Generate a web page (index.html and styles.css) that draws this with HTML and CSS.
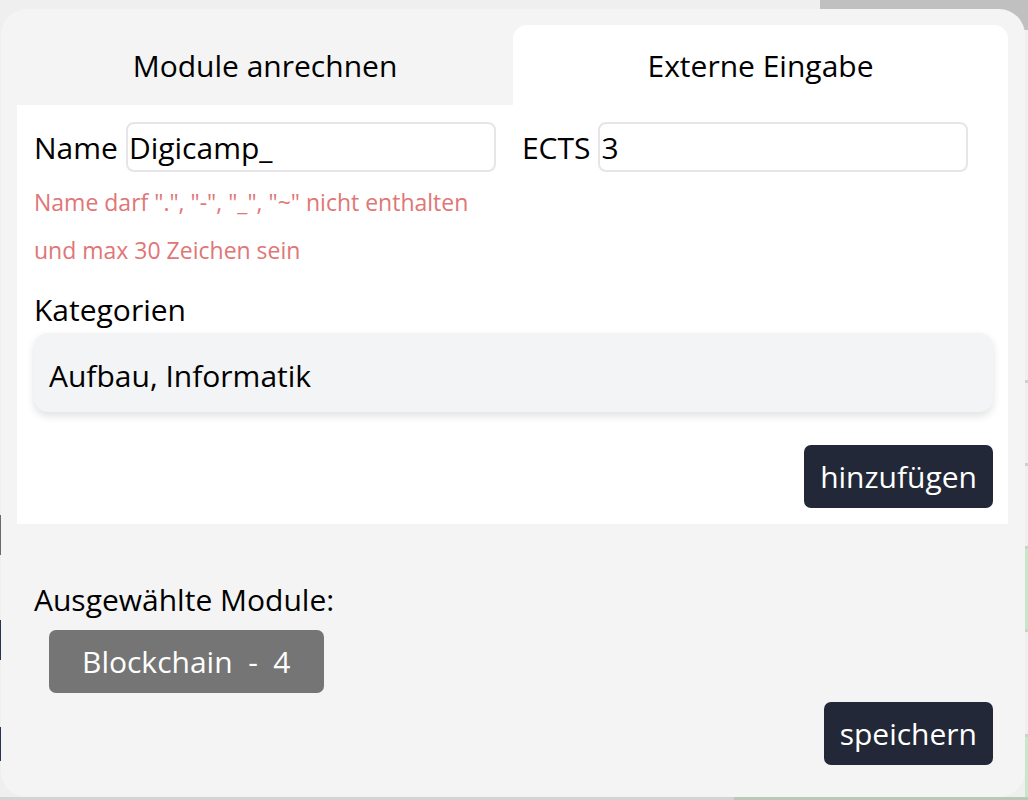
FILE: index.html
```html
<!DOCTYPE html>
<html lang="de">
<head>
<meta charset="utf-8">
<title>Module anrechnen</title>
<link rel="stylesheet" href="styles.css">
</head>
<body>
<div class="backdrop">
  <div class="bg-topright"></div>
  <div class="bg-line bg-line-1"></div>
  <div class="bg-line bg-line-2"></div>
  <div class="bg-green bg-green-1"></div>
  <div class="bg-green bg-green-2"></div>
  <div class="bg-dark bg-dark-1"></div>
  <div class="bg-dark bg-dark-2"></div>
  <div class="bg-dark bg-dark-3"></div>
  <div class="bg-bottom"></div>
</div>

<div class="modal">
  <div class="tabs">
    <div class="tab">Module anrechnen</div>
    <div class="tab tab-active">Externe Eingabe</div>
  </div>
  <div class="panel">
    <div class="field-row">
      <label class="field">
        <span class="field-label">Name</span>
        <input class="text-input" type="text" value="Digicamp_">
      </label>
      <label class="field field-ects">
        <span class="field-label">ECTS</span>
        <input class="text-input" type="text" value="3">
      </label>
    </div>
    <p class="error">Name darf ".", "-", "_", "~" nicht enthalten</p>
    <p class="error">und max 30 Zeichen sein</p>
    <div class="section-label">Kategorien</div>
    <div class="select-box">Aufbau, Informatik</div>
    <div class="actions">
      <button class="btn">hinzufügen</button>
    </div>
  </div>
  <div class="selected">
    <div class="section-label">Ausgewählte Module:</div>
    <div class="chips">
      <span class="chip">Blockchain&nbsp; - &nbsp;4</span>
    </div>
    <div class="actions actions-save">
      <button class="btn">speichern</button>
    </div>
  </div>
</div>
</body>
</html>
```

FILE: styles.css
```css
* { box-sizing: border-box; }

html, body {
  margin: 0;
  padding: 0;
}

body {
  width: 1028px;
  height: 800px;
  overflow: hidden;
  background: #efefef;
  font-family: "Open Sans", "Noto Sans", sans-serif;
  color: #000;
  position: relative;
}

.backdrop {
  position: absolute;
  inset: 0;
}

.bg-topright {
  position: absolute;
  left: 820px;
  top: 0;
  width: 208px;
  height: 30px;
  background: #c0c0c0;
}

.bg-line {
  position: absolute;
  left: 1025px;
  width: 3px;
  height: 3px;
  background: #cfcfcf;
}
.bg-line-1 { top: 380px; }
.bg-line-2 { top: 463px; }

.bg-green {
  position: absolute;
  left: 1025px;
  width: 3px;
  background: #c8e6c9;
  border-top: 3px solid #cfcfcf;
}
.bg-green-1 { top: 546px; height: 86px; border-bottom: 3px solid #cfcfcf; }
.bg-green-2 { top: 734px; height: 66px; }

.bg-dark {
  position: absolute;
  left: 0;
  width: 2px;
  background: #2a3350;
}
.bg-dark-1 { top: 515px; height: 40px; background: #6b6b6b; }
.bg-dark-2 { top: 620px; height: 40px; }
.bg-dark-3 { top: 727px; height: 34px; }

.bg-bottom {
  position: absolute;
  left: 0;
  bottom: 0;
  width: 1028px;
  height: 3px;
  background: linear-gradient(to right, #d4d4d4 0, #d4d4d4 734px, #b8c9b8 734px);
}

/* modal overlay */
.modal {
  position: absolute;
  left: 1px;
  top: 9px;
  width: 1024px;
  height: 788px;
  background: #f4f4f4;
  border-radius: 26px;
  padding: 16px 17px 0 16px;
  display: flex;
  flex-direction: column;
}

.tabs {
  display: grid;
  grid-template-columns: 496px 495px;
  height: 80px;
}

.tab {
  display: flex;
  align-items: center;
  justify-content: center;
  font-size: 30px;
  padding-top: 1px;
}

.tab-active {
  background: #fff;
  border-radius: 14px 14px 0 0;
}

.panel {
  background: #fff;
  padding: 17px 15px 16px 17px;
  display: flex;
  flex-direction: column;
}

.field-row {
  display: flex;
  gap: 26px;
  align-items: center;
}

.field {
  display: flex;
  align-items: center;
  gap: 8px;
}

.field-label {
  font-size: 30px;
}

.text-input {
  width: 370px;
  height: 50px;
  border: 2px solid #e5e5ea;
  border-radius: 8px;
  padding: 0 0 0 1px;
  font-family: inherit;
  font-size: 30px;
  color: #000;
  background: #fff;
  outline: none;
}

.error {
  margin: 0;
  color: #e07676;
  font-size: 23px;
  line-height: 48px;
}
.error:first-of-type { margin-top: 6px; }

.section-label {
  font-size: 30px;
  line-height: 40px;
}

.panel .section-label { margin-top: 16px; }

.select-box {
  margin-top: 3px;
  height: 79px;
  background: #f3f4f6;
  border-radius: 14px;
  box-shadow: 0 4px 8px rgba(0, 0, 0, 0.12);
  display: flex;
  align-items: center;
  padding: 5px 15px 0;
  font-size: 30px;
}

.actions {
  display: flex;
  justify-content: flex-end;
  margin-top: 33px;
}

.btn {
  background: #222837;
  color: #fff;
  border: none;
  border-radius: 7px;
  height: 63px;
  padding: 0 16px;
  font-family: inherit;
  font-size: 30px;
}

.selected {
  padding: 56px 15px 0 17px;
  display: flex;
  flex-direction: column;
}

.chips {
  display: flex;
  margin-top: 10px;
  padding-left: 15px;
}

.chip {
  background: #757575;
  color: #fff;
  border-radius: 7px;
  height: 63px;
  padding: 0 33px;
  display: flex;
  align-items: center;
  font-size: 30px;
}

.actions-save {
  margin-top: 9px;
}
```
